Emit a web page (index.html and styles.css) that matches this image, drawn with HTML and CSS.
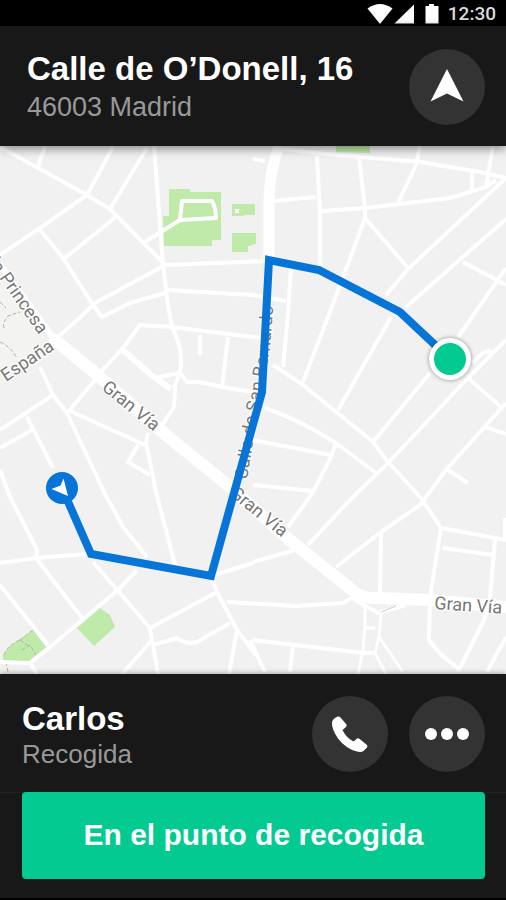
FILE: index.html
```html
<!DOCTYPE html>
<html lang="es">
<head>
    <meta charset="UTF-8">
    <meta name="viewport" content="width=device-width, initial-scale=1.0">
    <title>Recogida</title>
    <link rel="stylesheet" href="styles.css">
</head>
<body>
    <div class="status-bar">
        <svg class="status-icons" width="72" height="26" viewBox="0 0 72 26" aria-hidden="true">
            <path d="M0.5 8.500Q13 -0.500 25.500 8.500L13 24Z"/>
            <path d="M27.500 23.500L47 4.500V23.500Z"/>
            <path d="M58.500 6H62V4H67V6H71.500V23.500H58.500Z"/>
        </svg>
        <span class="clock">12:30</span>
    </div>

    <header class="header">
        <div class="info">
            <h1>Calle de O’Donell, 16</h1>
            <p>46003 Madrid</p>
        </div>
        <button type="button" class="round-btn" aria-label="Navegar">
            <svg width="76" height="76" viewBox="0 0 76 76">
                <path d="M38 20L54.500 52.500L38 44.500L21.500 52.500Z"/>
            </svg>
        </button>
    </header>

    <main class="map">
        <svg class="map-canvas" viewBox="0 146 506 528" preserveAspectRatio="xMidYMid slice">
            <!-- Parques -->
            <path class="plaza" d="M0 275L46 338L42 362L0 385Z"/>
            <g class="park">
                <path d="M169 189H190V192H221V240H212V246H164L163 216H169Z"/>
                <path d="M232 204H255V215H244V216H232Z"/>
                <path d="M232 233H256V244L248 246V252H232Z"/>
                <path d="M336 146H370V153L336 152Z"/>
                <path d="M77 628L100 608L110 615L115 627L94 646Z"/>
                <path d="M3 655L10 646L33 630L46 647L28 662L3 661Z"/>
            </g>
            <path class="trail" d="M0 302L6 308M4 322L8 316L20 312M4 328L3 322M0 342Q10 346 17 358M4 655Q8 645 20 640M20 640L33 630M22 650L30 645L36 655M6 662L8 672M20 640L29 646"/>

            <!-- Calles -->
            <g class="road">
                <path d="M2 148L38 168L87 195L110 209L165 265"/>
                <path d="M38 167L45 146M87 195L113 147M110 209L147 148"/>
                <path d="M87 195L40 228L0 255M40 230L63 258L93 305L102 317L130 303L165 293"/>
                <path d="M116 217L65 258"/>
                <path d="M154 146L163 265L168 305L172 327Q184 350 180 372L175 385L174 407L162 425"/>
                <path d="M165 265L95 303L77 320L57 338M165 265L268 261M168 290L253 295L286 301"/>
                <path d="M145 242L180 220L182 201H212Q216 208 216 218L180 220"/>
                <path d="M235 211H239"/>
                <path d="M273 201L316 197M317 156L320 213V267"/>
                <path d="M253 159L265 161M283 149L336 155L420 162L480 172L506 178"/>
                <path d="M359 158L365 207V218L345 272L328 317L303 382M420 146L416 165L398 203"/>
                <path d="M321 211L366 208L450 198L486 187L493 146M472 172V190M486 187L496 180"/>
                <path d="M365 218L408 268M506 178L408 269L386 295M506 219L406 307"/>
                <path d="M463 262L506 285M506 268L470 320L458 337M291 268L288 313L283 367"/>
                <path d="M391 317L338 410M273 365L303 385L373 442L388 462L421 498L441 528L506 540"/>
                <path d="M265 408Q300 420 336 443L376 473M253 440L331 455M336 443L331 457L313 492L288 527M253 485L313 491"/>
                <path d="M430 373L373 442M506 340L466 380L388 463L350 500L308 545M473 363Q484 348 492 352"/>
                <path d="M468 378L501 407M506 403L446 470L420 505L381 532L336 567M485 427L506 434M448 470L468 483"/>
                <path d="M381 533L380 593M441 528L430 597L429 640Q440 656 458 668M443 548L493 555M495 540L490 597L484 620L458 672M506 637L487 672M505 518V540"/>
                <path d="M253 562L295 550M227 602L296 606L343 603L352 598L378 613L406 605"/>
                <path d="M253 640L363 653H375M293 645L290 672M250 640L265 672"/>
                <path d="M0 563L37 558L87 554M0 470L10 497L37 550L36 558L82 618M0 585L48 645"/>
                <path d="M137 570L118 590L50 647L30 663L0 662M30 663L37 674"/>
                <path d="M93 562L150 628L152 640L122 674M152 640L158 674M150 628L217 592M211 577L217 592L237 630L256 655M237 630L229 674"/>
                <path d="M211 576L253 563M153 645L177 638Q187 645 197 642L230 623"/>
                <path d="M40 367L53 395L67 413L105 494L123 527L147 557M148 433L146 443L156 492L175 565"/>
                <path d="M0 430L53 395M0 448L32 430M27 417L53 468M68 412L95 380M70 411L145 445M138 445L128 462L150 475"/>
                <path d="M100 373L123 348L140 325L172 327L253 337L263 338M158 377L180 373L187 382H200L222 387L253 392M228 337L222 387M200 335V355"/>
            </g>
            <g class="road road-thin">
                <path d="M365 605V625L363 650L358 674M381 613L379 637L375 653L386 674M379 637L403 672M363 628H375"/>
            </g>
            <path class="road road-mid" d="M123 350L150 374L171 389"/>
            <path class="road road-wide" d="M279 146Q270 170 269 200V260"/>
            <path class="road road-mid" d="M0 265L55 340"/>
            <path class="road road-main" d="M55 340L100 377L160 430L230 487L286 537L352 590"/>
            <path class="road road-main" d="M352 590Q364 600 380 598L430 600L506 607"/>
            <path class="walk" d="M381 612L396 606"/>

            <!-- Nombres de calles -->
            <path id="calle" fill="none" d="M247 480L258 412L270 350L274 296"/>
            <g class="street-name">
                <text transform="translate(39 335) rotate(55)" text-anchor="end">la Princesa</text>
                <text transform="translate(6 382) rotate(-34)">España</text>
                <text transform="translate(101 389) rotate(39)">Gran Vía</text>
                <text transform="translate(229 495) rotate(39)">Gran Vía</text>
                <text transform="translate(434 609) rotate(4)">Gran Vía</text>
                <text><textPath href="#calle">Calle de San Bernardo</textPath></text>
            </g>

            <!-- Ruta -->
            <path class="route" d="M62 488L91 554L211 576L262 392L269 260L319 270L400 312L450 359"/>
            <circle class="start" cx="62" cy="488" r="16"/>
            <path class="start-arrow" d="M51.500 489L60.500 485.500L63.500 478.500L68 496Z"/>
            <circle class="end-ring" cx="450" cy="359" r="21"/>
            <circle class="end" cx="450" cy="359" r="16"/>
        </svg>
    </main>

    <footer class="footer">
        <div class="passenger">
            <div class="info">
                <h2>Carlos</h2>
                <p>Recogida</p>
            </div>
            <button type="button" class="round-btn" aria-label="Llamar">
                <svg width="76" height="76" viewBox="0 0 76 76">
                    <path d="M23 22L25.500 20.500Q27 20 28.500 21.500L34.500 28.500Q35 30 34 31L30.500 34Q34 41.500 41.500 45.500L45 42.500Q46 42 47 42.500L55 49Q56 50 55 51.500L51.500 55Q49 56.500 45 55.500Q34 53 26 42.500Q19.500 33 20 26Q20.500 23.500 23 22Z"/>
                </svg>
            </button>
            <button type="button" class="round-btn" aria-label="Más opciones">
                <svg width="76" height="76" viewBox="0 0 76 76">
                    <circle cx="22" cy="38" r="6"/>
                    <circle cx="38" cy="38" r="6"/>
                    <circle cx="54" cy="38" r="6"/>
                </svg>
            </button>
        </div>
        <div class="actions">
            <button type="button" class="pickup-btn">En el punto de recogida</button>
        </div>
    </footer>
</body>
</html>
```
FILE: styles.css
```css
* {
    margin: 0;
    padding: 0;
    box-sizing: border-box;
}

body {
    font-family: "Liberation Sans", Arial, sans-serif;
    background: #000;
    color: white;
    min-height: 100vh;
    display: flex;
    flex-direction: column;
}

.status-bar {
    height: 26px;
    display: flex;
    align-items: center;
    justify-content: flex-end;
    gap: 9px;
    padding-right: 10px;
}

.status-icons {
    fill: white;
}

.clock {
    font-family: Roboto, sans-serif;
    font-size: 19px;
    font-weight: 500;
    line-height: 26px;
    padding-top: 2px;
    color: #dcdcdc;
}

.header {
    position: relative;
    z-index: 1;
    display: flex;
    align-items: flex-start;
    gap: 21px;
    padding: 23px 21px 21px 27px;
    background: #181818;
    box-shadow: 0 2px 10px rgba(0, 0, 0, 0.5);
}

.info {
    flex: 1;
}

h1,
h2 {
    font-size: 33px;
    font-weight: bold;
    line-height: 40px;
}

.info p {
    font-size: 27px;
    line-height: 36px;
    color: #999;
}

.round-btn {
    width: 76px;
    height: 76px;
    flex: none;
    border: none;
    border-radius: 50%;
    background: #333;
    cursor: pointer;
}

.round-btn svg {
    display: block;
    fill: white;
}

.map {
    flex: 1;
    display: flex;
    min-height: 300px;
    background: #f1f1f1;
}

.map-canvas {
    flex: 1;
    width: 100%;
}

.plaza {
    fill: #f3f3f1;
}

.park {
    fill: #bfeaa9;
}

.trail {
    fill: none;
    stroke: #b9b495;
    stroke-width: 1;
    stroke-dasharray: 4 2;
}

.road {
    fill: none;
    stroke: white;
    stroke-width: 4;
    stroke-linejoin: round;
}

.road-thin {
    stroke-width: 3;
}

.road-mid {
    stroke-width: 6;
}

.road-wide {
    stroke-width: 11;
}

.road-main {
    stroke-width: 12;
    stroke-linecap: round;
}

.walk {
    stroke: #ccc;
    stroke-width: 1;
}

.street-name {
    font-family: Roboto, sans-serif;
    font-size: 18px;
    fill: #777;
    stroke: white;
    stroke-width: 2;
    paint-order: stroke;
}

.route {
    fill: none;
    stroke: #0775d8;
    stroke-width: 8;
}

.start {
    fill: #0775d8;
}

.start-arrow {
    fill: white;
}

.end-ring {
    fill: white;
    filter: drop-shadow(0 0 2px rgba(0, 0, 0, 0.4));
}

.end {
    fill: #02ca91;
}

.footer {
    position: relative;
    background: #181818;
    border-bottom: 2px solid #000;
    box-shadow: 0 -1px 5px rgba(0, 0, 0, 0.3);
}

.passenger {
    display: flex;
    align-items: center;
    gap: 21px;
    padding: 22px 21px 20px 22px;
}

.passenger p {
    font-size: 26px;
    line-height: 30px;
}

.actions {
    padding: 0 21px 19px 22px;
    border-top: 1px solid #222;
}

.pickup-btn {
    display: block;
    width: 100%;
    margin-top: -1px;
    padding: 25px 10px 26px;
    border: none;
    border-radius: 4px;
    background: #02ca91;
    color: white;
    font-family: inherit;
    font-size: 30px;
    font-weight: bold;
    line-height: 36px;
    cursor: pointer;
}
```
